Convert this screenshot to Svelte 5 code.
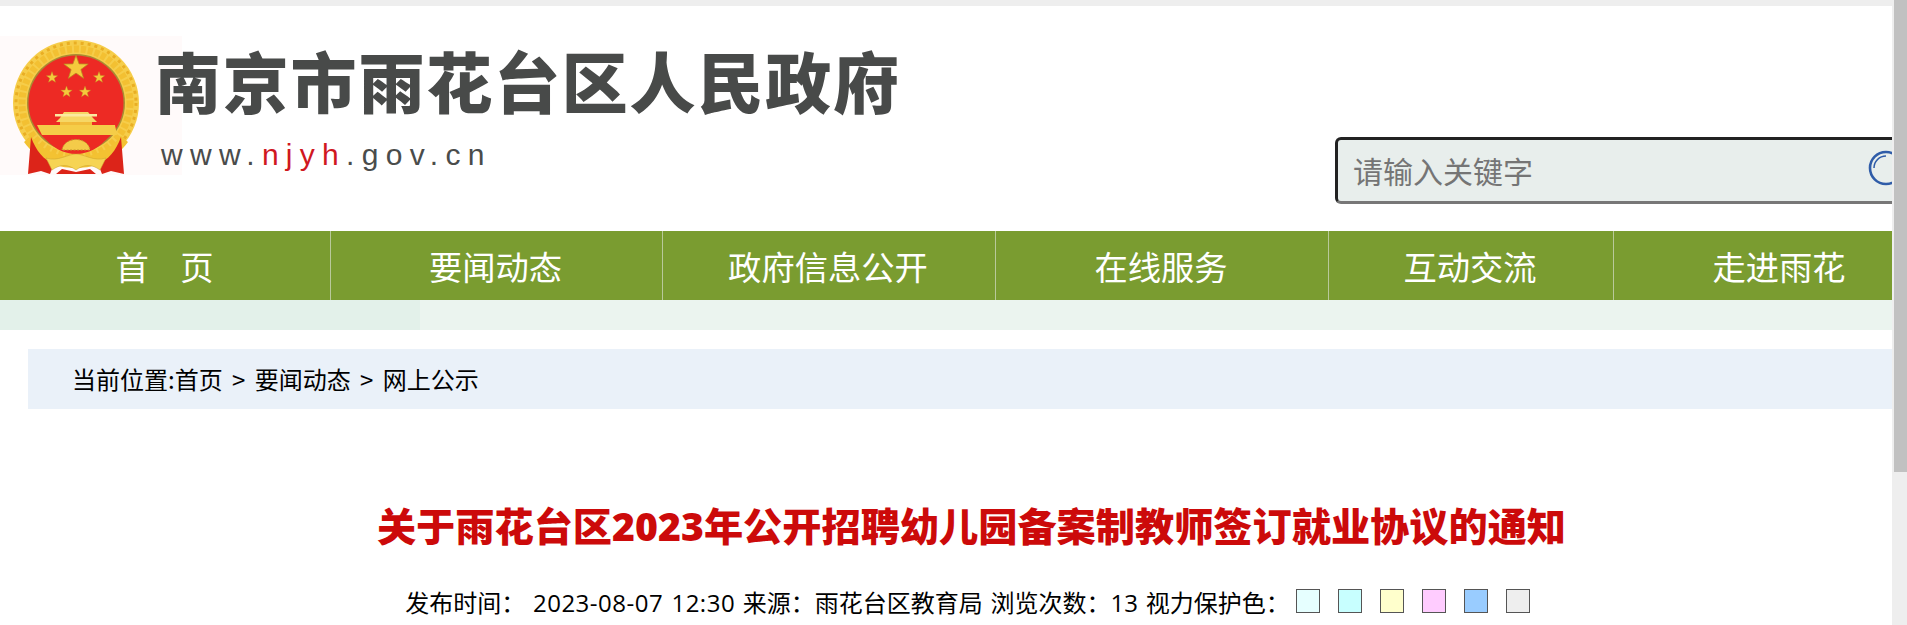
<script>
  const nav = [
    { label: '首　页', w: 330 },
    { label: '要闻动态', w: 332 },
    { label: '政府信息公开', w: 333 },
    { label: '在线服务', w: 333 },
    { label: '互动交流', w: 285 },
    { label: '走进雨花', w: 333 }
  ];
  const swatches = ['#e6ffff', '#c8ffff', '#ffffcc', '#ffccff', '#99ccff', '#eeeeee'];
  const smallStars = [[52, 41.5], [99, 41.5], [66.5, 56], [85, 56]];
  const starPath = 'M0 -10 L2.4 -3.2 L9.5 -3.1 L3.8 1.2 L5.9 8.1 L0 4 L-5.9 8.1 L-3.8 1.2 L-9.5 -3.1 L-2.4 -3.2 Z';
</script>

<div class="shell">
  <div class="page">
    <header class="top">
      <div class="emblem-box">
        <svg class="emblem" viewBox="0 0 182 139" width="182" height="139" aria-hidden="true">
          <circle cx="76" cy="67" r="63" fill="#f6cd4a"/>
          <circle cx="76" cy="67" r="60" fill="none" stroke="#e9ae24" stroke-width="3" stroke-dasharray="3 4"/>
          <circle cx="76" cy="67" r="54" fill="none" stroke="#f3c032" stroke-width="7" stroke-dasharray="5 2"/>
          <circle cx="76" cy="67" r="49" fill="#a98c33"/>
          <circle cx="76" cy="67" r="47.5" fill="#ed2a24"/>
          <g fill="#f5c93c" stroke="#b98d22" stroke-width="0.6">
            <path d={starPath} transform="translate(76 32) scale(1.28)"/>
            {#each smallStars as s}
              <path d={starPath} transform="translate({s[0]} {s[1]}) scale(0.6)"/>
            {/each}
          </g>
          <path d="M64 76 L88 76 L93 82 L97 86 L56 86 L60 82 Z" fill="#f6d765"/>
          <rect x="55" y="78" width="42" height="2.5" fill="#fbe9a0"/>
          <rect x="60" y="86" width="32" height="3" fill="#f1bc3b"/>
          <path d="M37 89 L115 89 L117 99 L42 99 Z" fill="#f5cd48"/>
          <path d="M42 99 L110 99 C100 112 88 118 76 118 C64 118 52 112 42 99 Z" fill="#ec2a23"/>
          <path d="M31 100 C40 112 54 120 76 122 C98 120 112 112 121 100 L128 106 C115 124 96 132 76 132 C56 132 37 124 24 106 Z" fill="#f3c232"/>
          <path d="M31 101 C36 115 44 124 54 128 L50 138 L41 135 L28 138 Z" fill="#dc2419"/>
          <path d="M121 101 C116 115 108 124 98 128 L102 138 L111 135 L124 138 Z" fill="#dc2419"/>
          <path d="M62 114 C64 100 88 100 90 114 Z" fill="#f4cb49" stroke="#c4942a" stroke-width="1" stroke-dasharray="2 1.5"/>
          <path d="M46 122 C58 126 68 118 76 118 C84 118 94 126 106 122 L100 134 C92 128 84 128 76 134 C68 128 60 128 52 134 Z" fill="#f6d453" stroke="#c9a02e" stroke-width="0.5"/>
          <path d="M56 138 L62 133 L76 136 L90 133 L96 138 Z" fill="#dc2419"/>
        </svg>
      </div>
      <div class="brand">
        <div class="brand-name">南京市雨花台区人民政府</div>
        <div class="brand-url">www.<span class="accent">njyh</span>.gov.cn</div>
      </div>
      <div class="search">
        <span class="placeholder">请输入关键字</span>
        <svg class="search-icon" viewBox="0 0 38 38" width="38" height="38" aria-hidden="true">
          <circle cx="19" cy="19" r="16" fill="none" stroke="#2f5ca8" stroke-width="2.6"/>
          <path d="M7 19 A12 12 0 0 1 19 7" fill="none" stroke="#2f5ca8" stroke-width="1.6"/>
        </svg>
      </div>
    </header>

    <nav class="nav">
      {#each nav as item, i}
        <a class="nav-item" class:first={i === 0} style="width:{item.w}px" href="#top">{item.label}</a>
      {/each}
    </nav>
    <div class="band"><div class="band-left"></div></div>

    <div class="crumbs">当前位置:首页 &gt; 要闻动态 &gt; 网上公示</div>

    <main class="article">
      <h1>关于雨花台区2023年公开招聘幼儿园备案制教师签订就业协议的通知</h1>
      <div class="meta">
        <span>发布时间： <span class="stamp">2023-08-07 12:30</span> 来源：雨花台区教育局 浏览次数：13 视力保护色：</span>
        <span class="swatches">
          {#each swatches as c}
            <i class="swatch" style="background:{c}"></i>
          {/each}
        </span>
      </div>
    </main>
  </div>

  <div class="scrollbar"><div class="thumb"></div></div>
</div>

<style>
  :global(html), :global(body) {
    margin: 0;
    overflow: hidden;
    background: #fff;
  }
  .shell {
    height: 625px;
    width: 1907px;
    overflow: hidden;
    position: relative;
    font-family: "Open Sans", "Noto Sans CJK SC", sans-serif;
    color: #000;
  }
  .page {
    width: 1892px;
    height: 625px;
    overflow: hidden;
    border-top: 6px solid #eee;
    box-sizing: border-box;
  }
  .top {
    display: flex;
    height: 225px;
    width: 1945px;
  }
  .emblem-box {
    width: 182px;
    height: 139px;
    margin-top: 30px;
    background: #fffafa;
    flex: none;
    margin-right: -24px;
  }
  .emblem {
    display: block;
    filter: blur(0.35px);
  }
  .brand {
    flex: none;
    width: 1177px;
    position: relative;
  }
  .brand-name {
    font-family: "Noto Sans CJK SC", sans-serif;
    font-weight: 900;
    font-size: 66px;
    letter-spacing: 1.8px;
    line-height: 80px;
    margin-top: 33px;
    margin-left: -3px;
    color: #484a49;
  }
  .brand-url {
    font-family: "Liberation Sans", sans-serif;
    font-size: 30px;
    letter-spacing: 7.3px;
    line-height: 30px;
    margin: 21px 0 0 3px;
    color: #4a4c4b;
  }
  .accent { color: #d0181f; }
  .search {
    flex: none;
    width: 600px;
    height: 67px;
    margin-top: 131px;
    box-sizing: border-box;
    background: #e8eeec;
    border: 3px solid #222;
    border-bottom-color: #777;
    border-radius: 6px;
    display: flex;
    align-items: center;
    padding-left: 15px;
    position: relative;
  }
  .placeholder {
    font-family: "Noto Sans CJK SC", sans-serif;
    font-size: 30px;
    line-height: 40px;
    margin-top: -2px;
    color: #757575;
  }
  .search-icon {
    position: absolute;
    left: 529px;
    top: 9px;
  }
  .nav {
    display: flex;
    height: 69px;
    width: 1945px;
    background: #7a9c30;
  }
  .nav-item {
    box-sizing: border-box;
    flex: none;
    border-left: 1px solid #b9c99a;
    color: #fff;
    text-decoration: none;
    text-align: center;
    font-family: "Noto Sans CJK SC", sans-serif;
    font-size: 33.3px;
    font-weight: 400;
    line-height: 69px;
    padding-right: 2px;
  }
  .nav-item.first {
    border-left: 0;
    letter-spacing: -1px;
  }
  .band {
    height: 30px;
    background: #ebf4ef;
  }
  .band-left {
    width: 420px;
    height: 30px;
    background: #e3f1ea;
  }
  .crumbs {
    margin: 19px 0 0 28px;
    width: 1887px;
    height: 60px;
    box-sizing: border-box;
    padding-left: 44px;
    background: #eaf1f9;
    font-family: "Noto Sans CJK SC", sans-serif;
    font-size: 24px;
    line-height: 60px;
    word-spacing: 4px;
  }
  .article {
    margin-left: 28px;
    width: 1887px;
    text-align: center;
  }
  h1 {
    margin: 91px 0 0;
    font-family: "Open Sans", "Noto Sans CJK SC", sans-serif;
    font-size: 39.2px;
    font-weight: 800;
    line-height: 52px;
    color: #cc0a0a;
  }
  .meta {
    margin-top: 33px;
    padding-right: 8px;
    font-size: 24px;
    line-height: 36px;
    word-spacing: 1.5px;
    display: flex;
    justify-content: center;
    align-items: center;
  }
  .stamp { letter-spacing: 0.5px; }
  .swatches {
    display: flex;
    gap: 18px;
    margin-left: 6px;
    margin-bottom: 4px;
  }
  .swatch {
    display: block;
    width: 24px;
    height: 24px;
    box-sizing: border-box;
    border: 1.5px solid #555;
  }
  .scrollbar {
    position: absolute;
    top: 0;
    right: 0;
    width: 15px;
    height: 625px;
    background: #eee;
  }
  .thumb {
    margin-left: 2px;
    width: 13px;
    height: 472px;
    background: #c1c1c1;
  }
</style>
